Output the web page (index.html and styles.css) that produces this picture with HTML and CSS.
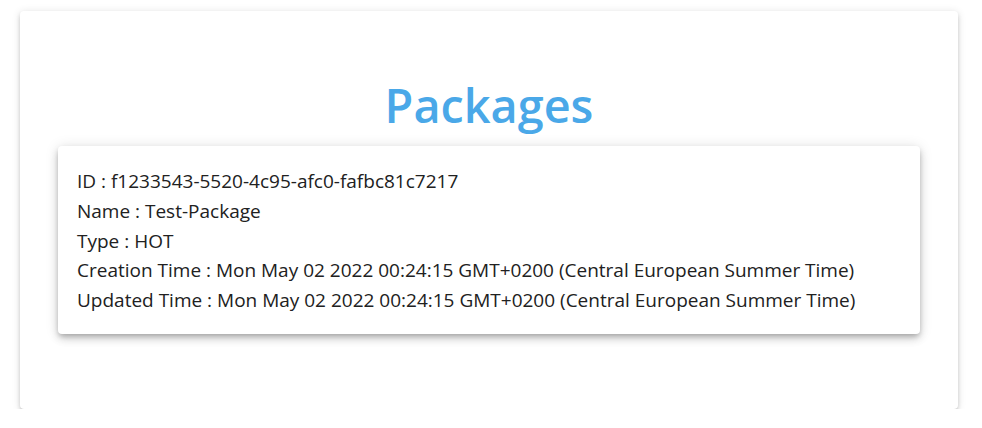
FILE: index.html
```html
<!DOCTYPE html>
<html>
<head>
<meta charset="utf-8">
<link rel="stylesheet" href="styles.css">
</head>
<body>
<div class="page">
  <div class="outer">
    <h1 class="title">Packages</h1>
    <div class="card">
      <div class="line">ID : f1233543-5520-4c95-afc0-fafbc81c7217</div>
      <div class="line">Name : Test-Package</div>
      <div class="line">Type : HOT</div>
      <div class="line">Creation Time : Mon May 02 2022 00:24:15 GMT+0200 (Central European Summer Time)</div>
      <div class="line">Updated Time : Mon May 02 2022 00:24:15 GMT+0200 (Central European Summer Time)</div>
    </div>
  </div>
</div>
</body>
</html>
```
FILE: styles.css
```css
html, body {
  margin: 0;
  padding: 0;
  background: #ffffff;
}
body {
  font-family: "Open Sans", "Noto Sans", sans-serif;
  color: #212121;
}
.page {
  padding: 11px 24px 0 20px;
}
.outer {
  background: #fff;
  border-radius: 4px;
  box-shadow: 0 3px 3px -2px rgba(0,0,0,0.2), 0 3px 4px 0 rgba(0,0,0,0.14), 0 1px 8px 0 rgba(0,0,0,0.12);
  height: 398px;
  box-sizing: border-box;
  padding: 0 38px;
  display: flex;
  flex-direction: column;
}
.title {
  margin: 0;
  height: 135px;
  display: flex;
  align-items: flex-end;
  justify-content: center;
  padding-bottom: 17px;
  box-sizing: border-box;
  font-size: 46.8px;
  font-weight: 600;
  color: #4aa8e8;
  line-height: 1;
}
.card {
  background: #fff;
  border-radius: 4px;
  box-shadow: 0 3px 5px -1px rgba(0,0,0,0.2), 0 5px 8px 0 rgba(0,0,0,0.14), 0 1px 14px 0 rgba(0,0,0,0.12);
  padding: 21px 19px 18px;
}
.line {
  font-size: 19px;
  line-height: 29.8px;
  white-space: nowrap;
}
```
